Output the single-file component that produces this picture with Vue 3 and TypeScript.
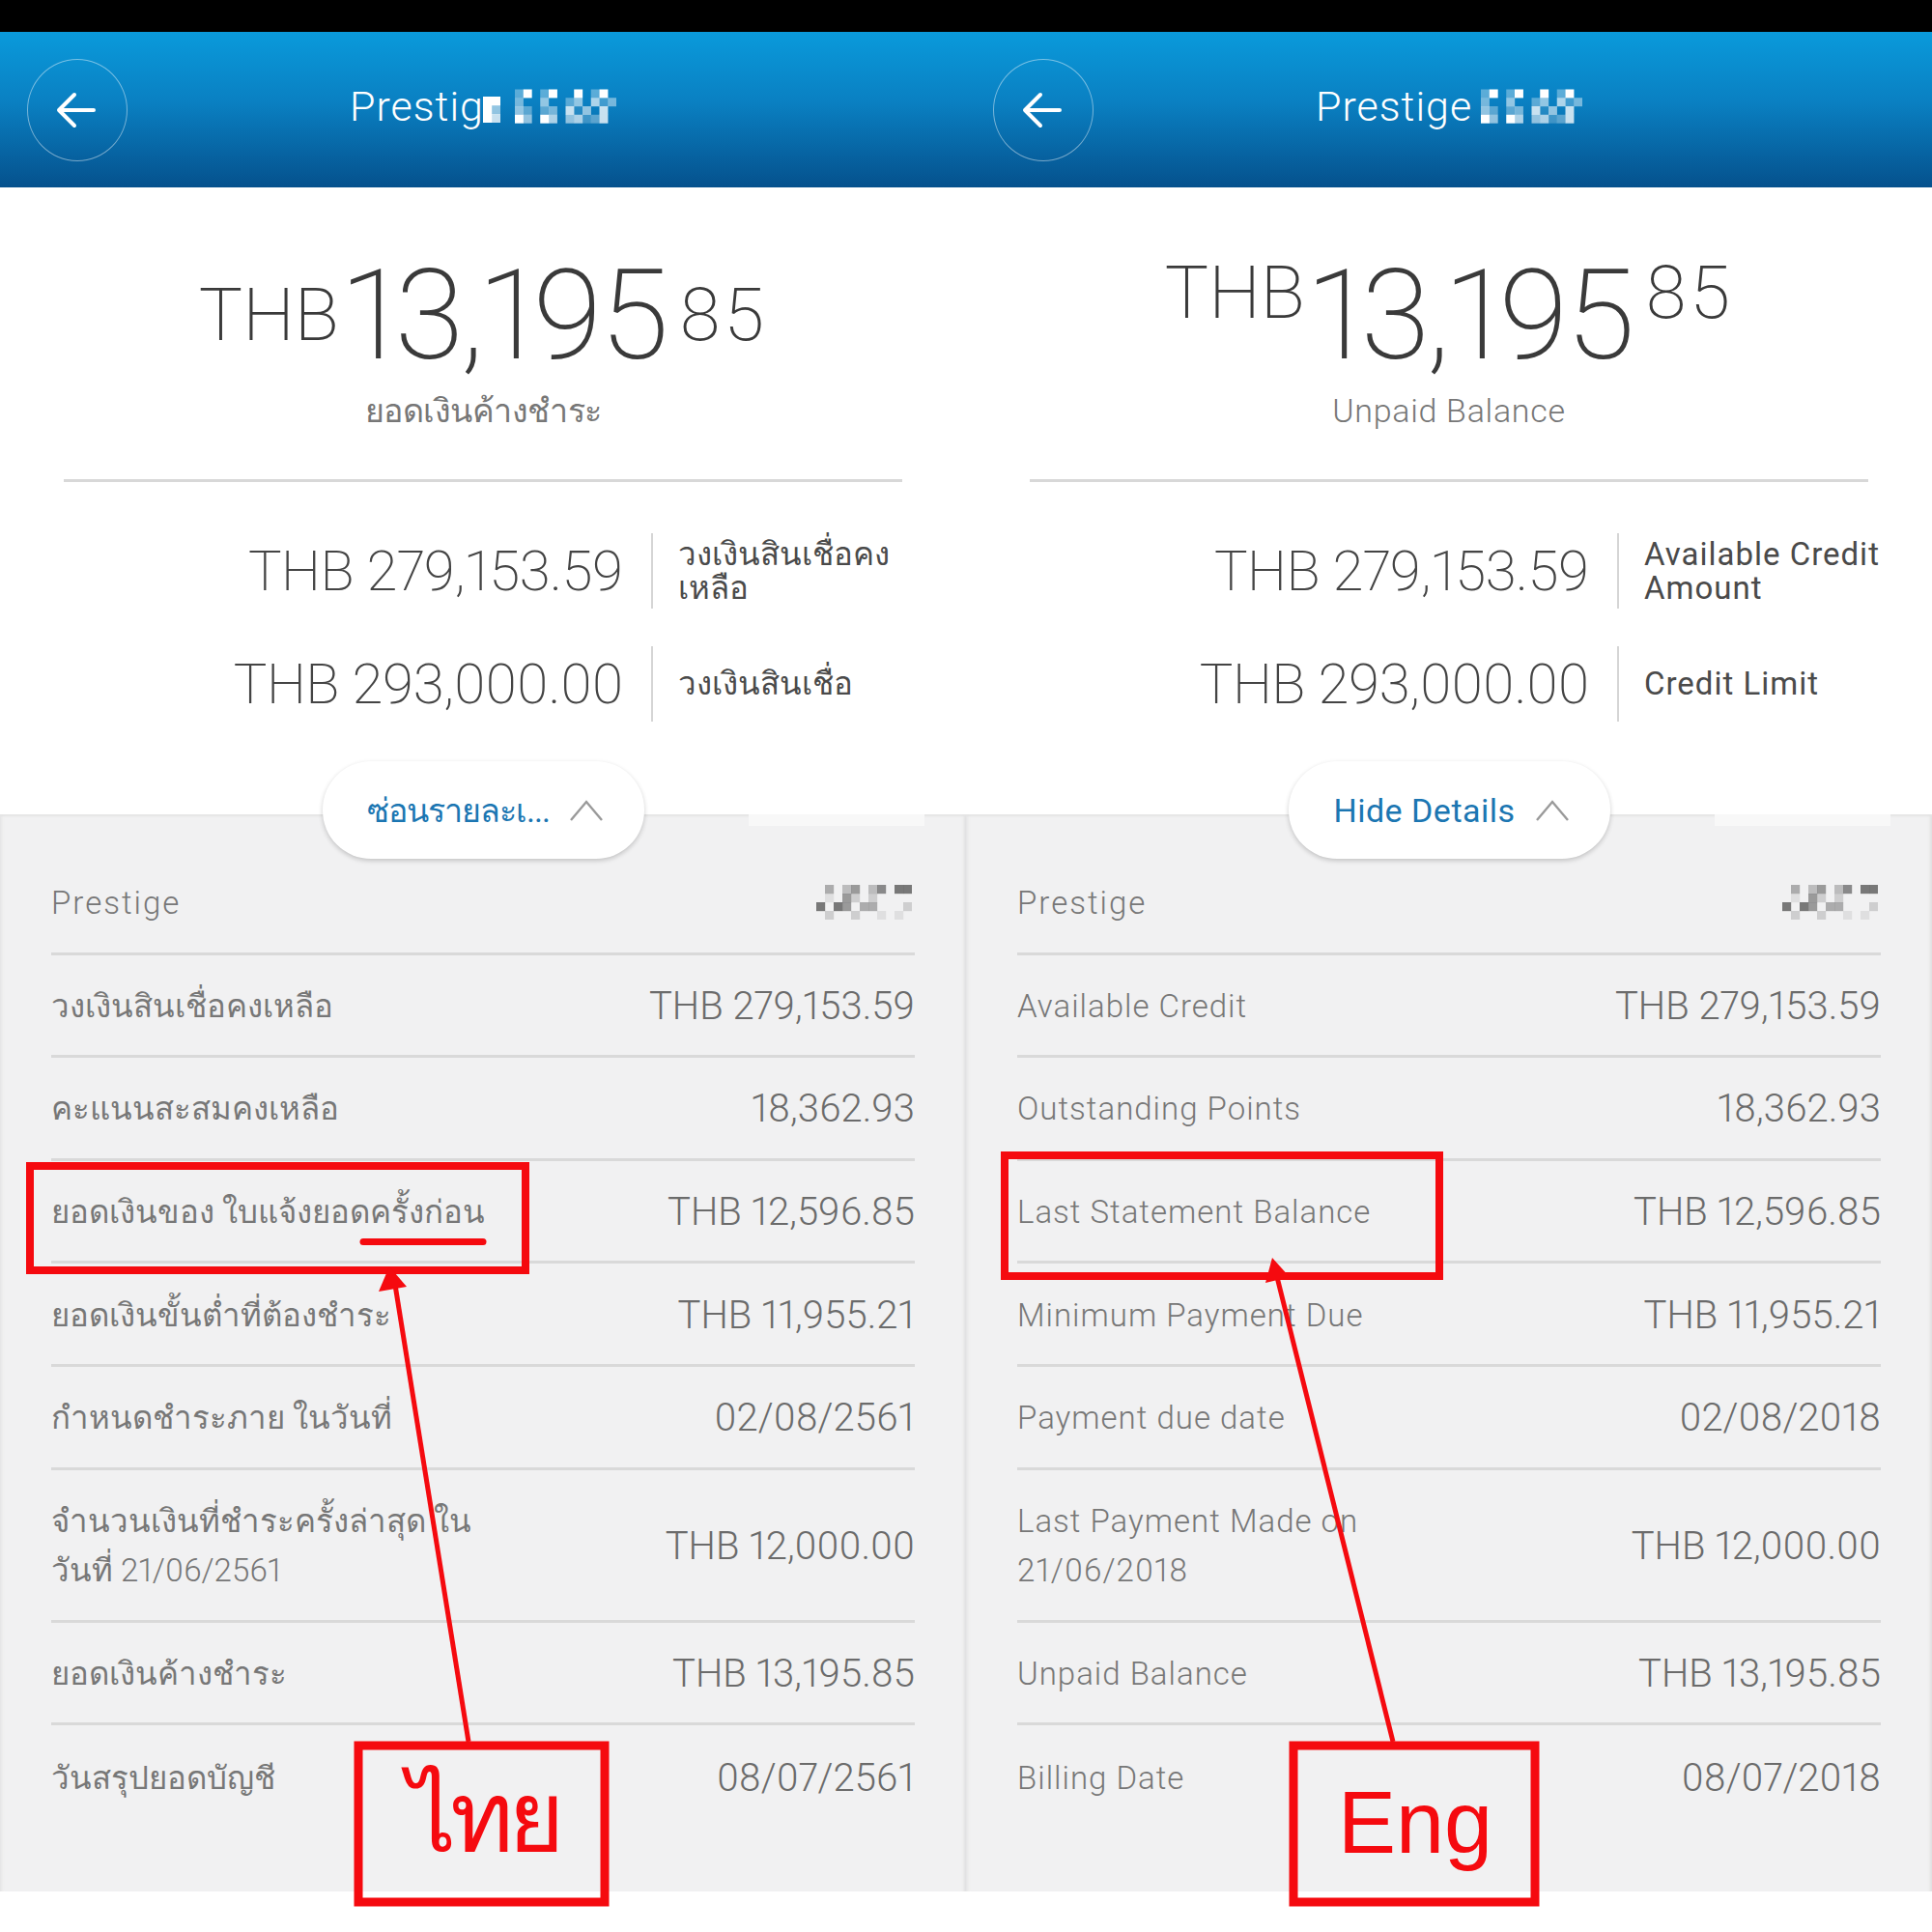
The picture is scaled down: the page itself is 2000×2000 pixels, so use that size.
<script setup lang="ts">
interface Row {
  label: string;
  value: string;
}

interface Panel {
  id: string;
  title: string;
  raised: boolean;
  unpaid: string;
  available: string;
  limit: string;
  toggle: string;
  rows: Row[];
}

interface Cell {
  x: number;
  y: number;
  opacity: number;
}

const panels: Panel[] = [
  {
    id: 'th',
    title: 'Prestig',
    raised: false,
    unpaid: 'ยอดเงินค้างชำระ',
    available: 'วงเงินสินเชื่อคง\nเหลือ',
    limit: 'วงเงินสินเชื่อ',
    toggle: 'ซ่อนรายละเ...',
    rows: [
      { label: 'วงเงินสินเชื่อคงเหลือ', value: 'THB 279,153.59' },
      { label: 'คะแนนสะสมคงเหลือ', value: '18,362.93' },
      { label: 'ยอดเงินของ ใบแจ้งยอดครั้งก่อน', value: 'THB 12,596.85' },
      { label: 'ยอดเงินขั้นต่ำที่ต้องชำระ', value: 'THB 11,955.21' },
      { label: 'กำหนดชำระภาย ในวันที่', value: '02/08/2561' },
      { label: 'จำนวนเงินที่ชำระครั้งล่าสุด ใน\nวันที่ 21/06/2561', value: 'THB 12,000.00' },
      { label: 'ยอดเงินค้างชำระ', value: 'THB 13,195.85' },
      { label: 'วันสรุปยอดบัญชี', value: '08/07/2561' },
    ],
  },
  {
    id: 'en',
    title: 'Prestige',
    raised: true,
    unpaid: 'Unpaid Balance',
    available: 'Available Credit\nAmount',
    limit: 'Credit Limit',
    toggle: 'Hide Details',
    rows: [
      { label: 'Available Credit', value: 'THB 279,153.59' },
      { label: 'Outstanding Points', value: '18,362.93' },
      { label: 'Last Statement Balance', value: 'THB 12,596.85' },
      { label: 'Minimum Payment Due', value: 'THB 11,955.21' },
      { label: 'Payment due date', value: '02/08/2018' },
      { label: 'Last Payment Made on\n21/06/2018', value: 'THB 12,000.00' },
      { label: 'Unpaid Balance', value: 'THB 13,195.85' },
      { label: 'Billing Date', value: '08/07/2018' },
    ],
  },
];

const toCells = (pattern: string[]): Cell[] => {
  const cells: Cell[] = [];
  pattern.forEach((line, y) => {
    line.split('').forEach((ch, x) => {
      if (ch !== '0') {
        cells.push({ x, y, opacity: Number(ch) / 9 });
      }
    });
  });
  return cells;
};

// censored card number
const titleCells = toCells(['390390090390', '400500350624', '530340715070', '950960562370']);
const blockCells = toCells(['99', '95', '97']);
const numberCells = toCells(['04035036077', '01052020000', '70750440002', '02002001010']);
</script>

<template>
  <div class="shot">
    <div class="topbar"></div>

    <div class="panels">
      <section v-for="panel in panels" :key="panel.id" class="panel" :class="`panel--${panel.id}`">
        <header class="head">
          <button class="back" type="button" aria-label="Back">
            <svg width="42" height="38" viewBox="0 0 42 38" fill="none" stroke="#fff" stroke-width="4" stroke-linecap="round" stroke-linejoin="round">
              <path d="M3 19H39M19 3 3 19l16 16" />
            </svg>
          </button>
          <div class="head__title">
            <span>{{ panel.title }}</span>
            <svg v-if="panel.id === 'th'" class="block" width="18" height="27" viewBox="0 0 2 3">
              <rect v-for="(c, i) in blockCells" :key="i" :x="c.x" :y="c.y" width="1.02" height="1.02" fill="#fff" :opacity="c.opacity" />
            </svg>
            <svg width="105" height="36" viewBox="0 0 12 4">
              <rect v-for="(c, i) in titleCells" :key="i" :x="c.x" :y="c.y" width="1.02" height="1.02" fill="#fff" :opacity="c.opacity" />
            </svg>
          </div>
        </header>

        <div class="top">
          <div class="amount" :class="{ 'amount--raised': panel.raised }">
            <span class="amount__cur">THB</span>
            <span class="amount__main">13,195</span>
            <span class="amount__dec">85</span>
          </div>
          <p class="unpaid">{{ panel.unpaid }}</p>
          <hr class="rule" />

          <div class="summaries">
            <div class="summary">
              <span class="summary__value">THB 279,153.59</span>
              <span class="summary__label">{{ panel.available }}</span>
            </div>
            <div class="summary">
              <span class="summary__value">THB 293,000.00</span>
              <span class="summary__label">{{ panel.limit }}</span>
            </div>
          </div>
        </div>

        <div class="details">
          <span class="strip"></span>
          <button class="toggle" type="button">
            <span>{{ panel.toggle }}</span>
            <svg width="36" height="24" viewBox="0 0 36 24" fill="none" stroke="#9a9a9a" stroke-width="2.4">
              <path d="M2 22 18 3l16 19" />
            </svg>
          </button>

          <div class="row">
            <span class="row__label row__label--card">Prestige</span>
            <svg class="masked" width="99" height="36" viewBox="0 0 11 4">
              <rect v-for="(c, i) in numberCells" :key="i" :x="c.x" :y="c.y" width="1.02" height="1.02" fill="#555" :opacity="c.opacity" />
            </svg>
          </div>
          <div v-for="row in panel.rows" :key="row.label" class="row" :class="{ 'row--tall': row.label.includes('\n') }">
            <span class="row__label">{{ row.label }}</span>
            <span class="row__value">{{ row.value }}</span>
          </div>
        </div>
      </section>
    </div>

    <!-- red annotations drawn on top of the screenshots -->
    <svg class="marks" width="2000" height="2000" viewBox="0 0 2000 2000" fill="none" stroke="#f50a0f">
      <rect x="31" y="1207" width="513" height="108" stroke-width="8" />
      <path d="M376 1285.5H500" stroke-width="7" stroke-linecap="round" />
      <path d="M485 1803 409 1330" stroke-width="5" />
      <path d="M403 1311 392 1337 421 1332Z" fill="#f50a0f" stroke="none" />
      <rect x="371" y="1807" width="255" height="162" stroke-width="9" />

      <rect x="1040" y="1196" width="450" height="125" stroke-width="8" />
      <path d="M1442 1803 1322 1322" stroke-width="5" />
      <path d="M1317 1302 1310 1328 1335 1322Z" fill="#f50a0f" stroke="none" />
      <rect x="1339" y="1807" width="250" height="162" stroke-width="9" />
    </svg>
    <span class="tag tag--th">ไทย</span>
    <span class="tag tag--en">Eng</span>
  </div>
</template>

<style scoped>
.shot {
  position: relative;
  width: 2000px;
  height: 2000px;
  overflow: hidden;
  background: #fff;
  font-family: Roboto, "Noto Sans", sans-serif;
  font-variant-numeric: proportional-nums;
}

.topbar {
  height: 33px;
  background: #000;
}

.panels {
  display: grid;
  grid-template-columns: 1000px 1000px;
}

.head {
  position: relative;
  height: 161px;
  display: flex;
  align-items: center;
  justify-content: center;
  background: linear-gradient(#0a9adb, #0a80c2 45%, #05518d);
}

.back {
  position: absolute;
  left: 28px;
  top: 28px;
  width: 104px;
  height: 106px;
  padding: 0 2px 0 0;
  display: flex;
  align-items: center;
  justify-content: center;
  border: 1.5px solid rgba(255, 255, 255, 0.45);
  border-radius: 50%;
  background: none;
}

.head__title {
  width: 276px;
  display: flex;
  align-items: center;
  justify-content: space-between;
  margin-bottom: 8px;
  color: #fff;
  font-size: 43px;
  font-weight: 300;
  letter-spacing: 1px;
}

.block {
  margin-left: -14px;
  margin-right: 2px;
  margin-top: 8px;
}

.top {
  height: 649px;
  padding-top: 1px;
  box-sizing: border-box;
}

.amount {
  height: 180px;
  display: flex;
  align-items: center;
  justify-content: center;
  color: #3a3a3a;
  font-weight: 200;
  padding-top: 82px;
  box-sizing: border-box;
}

.amount__cur {
  font-size: 76px;
  margin-right: 4px;
}

.amount__main {
  font-size: 130px;
  letter-spacing: -3.5px;
}

.amount__dec {
  font-size: 76px;
  margin-left: 14px;
  letter-spacing: 3px;
}

.amount--raised .amount__cur,
.amount--raised .amount__dec {
  position: relative;
  top: -23px;
}

.unpaid {
  margin: 28px 0 0;
  text-align: center;
  color: #777;
  font-size: 34px;
  font-weight: 300;
  line-height: 44px;
  letter-spacing: 0.7px;
}

.panel--th .unpaid {
  letter-spacing: -0.5px;
}

.rule {
  margin: 49px 66px 0;
  height: 3px;
  border: 0;
  background: #d8d8d8;
}

.summaries {
  margin-top: 33px;
}

.summary {
  display: grid;
  grid-template-columns: 645px 1fr;
  height: 117px;
  align-items: center;
}

.summary__value {
  text-align: right;
  color: #444;
  font-size: 58px;
  font-weight: 200;
  letter-spacing: -0.5px;
}

.summary__label {
  display: flex;
  align-items: center;
  height: 78px;
  margin-left: 29px;
  padding-left: 26px;
  border-left: 2px solid #d5d5d5;
  color: #4a4a4a;
  font-size: 33px;
  line-height: 35px;
  letter-spacing: 1px;
  white-space: pre-line;
}

.panel--th .summary__label {
  letter-spacing: 0;
}

.details {
  position: relative;
  height: 1115px;
  padding: 39px 53px 0;
  box-sizing: border-box;
  background: #f1f1f2;
  box-shadow: inset 0 2px 2px #e4e4e4, inset 4px 0 3px -2px #e6e6e6, inset -4px 0 3px -2px #e0e0e0;
}

.strip {
  position: absolute;
  left: 775px;
  top: 0;
  width: 182px;
  height: 12px;
  background: #f8f8f8;
}

.toggle {
  position: absolute;
  left: 334px;
  top: -55px;
  width: 333px;
  height: 101px;
  display: flex;
  align-items: center;
  justify-content: center;
  gap: 20px;
  padding: 0 0 0 4px;
  border: 0;
  border-radius: 50px;
  background: #fff;
  box-shadow: 0 2px 5px rgba(0, 0, 0, 0.2);
  color: #1b76b2;
  font: inherit;
  font-size: 34px;
  letter-spacing: 0.5px;
}

.panel--th .toggle {
  letter-spacing: -1px;
}

.row {
  height: 106.6px;
  box-sizing: border-box;
  display: flex;
  align-items: center;
  justify-content: space-between;
  border-bottom: 3px solid #d9d9d9;
}

.row--tall {
  height: 158px;
}

.row:last-child {
  border-bottom: 0;
}

.row__label {
  color: #777;
  font-size: 33px;
  font-weight: 300;
  line-height: 51px;
  letter-spacing: 1px;
  white-space: pre-line;
  padding-top: 2px;
}

.panel--th .row__label {
  letter-spacing: 0;
}

.panel .row__label--card {
  letter-spacing: 2px;
}

.row__value {
  color: #6b6b6b;
  font-size: 40px;
  font-weight: 300;
  padding-top: 2px;
}

.masked {
  margin-right: 3px;
}

.marks {
  position: absolute;
  left: 0;
  top: 0;
}

.tag {
  position: absolute;
  color: #f50a0f;
  line-height: 1;
}

.tag--th {
  left: 422px;
  top: 1832px;
  font-size: 100px;
  font-weight: 500;
  letter-spacing: -6px;
}

.tag--en {
  left: 1385px;
  top: 1842px;
  font-family: "Liberation Sans", sans-serif;
  font-size: 90px;
}
</style>
